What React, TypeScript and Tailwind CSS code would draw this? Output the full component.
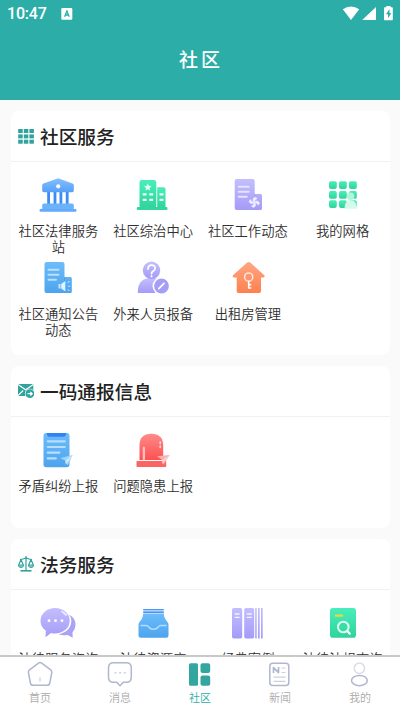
import type { ReactNode } from "react";

type Entry = { label: string; icon: ReactNode };

function Icon({ children }: { children: ReactNode }) {
  return (
    <svg viewBox="0 0 40 40" className="h-10 w-10 shrink-0" fill="none">
      {children}
    </svg>
  );
}

function Gradients() {
  return (
    <svg className="absolute h-0 w-0" aria-hidden="true">
      <defs>
        <linearGradient id="blue" x1="0" y1="0" x2="0" y2="1">
          <stop offset="0" stopColor="#84c1fc" />
          <stop offset="1" stopColor="#559ffa" />
        </linearGradient>
        <linearGradient id="sky" x1="0" y1="0" x2="0" y2="1">
          <stop offset="0" stopColor="#6dbcfa" />
          <stop offset="1" stopColor="#4da4ee" />
        </linearGradient>
        <linearGradient id="green" x1="0" y1="0" x2="0" y2="1">
          <stop offset="0" stopColor="#48eebb" />
          <stop offset="1" stopColor="#30d39a" />
        </linearGradient>
        <linearGradient id="violet" x1="0" y1="0" x2="0" y2="1">
          <stop offset="0" stopColor="#c3bffd" />
          <stop offset="1" stopColor="#a49bf8" />
        </linearGradient>
        <linearGradient id="orange" x1="0" y1="0" x2="0" y2="1">
          <stop offset="0" stopColor="#ffa683" />
          <stop offset="1" stopColor="#fd814f" />
        </linearGradient>
        <linearGradient id="red" x1="0" y1="0" x2="0" y2="1">
          <stop offset="0" stopColor="#ff8b8b" />
          <stop offset="1" stopColor="#fd5050" />
        </linearGradient>
      </defs>
    </svg>
  );
}

const courthouse = (
  <Icon>
    <path d="M9.2 16h2.8v13H9.2zM15.6 16h2.8v13h-2.8zM21.5 16h2.8v13h-2.8zM27.8 16h2.8v13h-2.8z" fill="#3a8cf8" />
    <path d="M20.2 3.3 34.6 8.6q1.2.5 1.2 1.6v5.3q0 1.7-1.6 1.7H5.8q-1.6 0-1.6-1.7v-5.3q0-1.1 1.2-1.6z" fill="url(#blue)" />
    <circle cx="20.2" cy="11.3" r="2.1" fill="#fff" />
    <path d="M6 28.5h28q1.8 0 1.8 1.8v3.9H4.2v-3.9q0-1.8 1.8-1.8z" fill="#6ab3fb" />
    <rect x="1.5" y="34" width="37" height="2.8" rx="1.2" fill="#62abfa" />
  </Icon>
);

const office = (
  <Icon>
    <rect x="6.5" y="5" width="16.8" height="28.5" rx="2.4" fill="url(#green)" />
    <path d="M24.2 12.3h6.3q2 0 2 2v19h-8.3z" fill="url(#green)" />
    <rect x="3.8" y="32" width="30.7" height="3" rx="1" fill="#35d5a0" />
    <path d="m14.8 8.2 1.1 2.5 2.7.3-2 1.9.6 2.7-2.4-1.4-2.4 1.4.6-2.7-2-1.9 2.7-.3z" fill="#dbfff2" />
    <path d="M9.7 18.2h3.8v2.3H9.7zM16.3 18.2h3.8v2.3h-3.8zM9.7 23.8h3.8v2.3H9.7zM16.3 23.8h3.8v2.3h-3.8zM26.5 18.2h4v2.3h-4zM26.5 23.8h4v2.3h-4z" fill="#eefff9" />
  </Icon>
);

const workNews = (
  <Icon>
    <path d="M8.7 4h16q2 0 2 2v13h5.8q1.5 0 1.5 1.5v13q0 1.5-1.5 1.5H8.7q-2 0-2-2V6q0-2 2-2z" fill="url(#violet)" />
    <path d="M26.7 19v16" stroke="#9d94f3" strokeWidth=".6" />
    <path d="M10.7 11.7h10M10.7 16.7h10M10.7 21.8h8" stroke="#e6e3ff" strokeWidth="2" strokeLinecap="round" />
    <path d="M26.3 27.3q-3-3 .6-5.3l2.3 1.4q-2.4.8-2.9 3.9q3-3 5.3.6l-1.4 2.3q-.8-2.4-3.9-2.9q3 3-.6 5.3l-2.3-1.4q2.4-.8 2.9-3.9q-3 3-5.3-.6l1.4-2.3q.8 2.4 3.9 2.9z" fill="#f1efff" stroke="#f1efff" strokeWidth=".5" />
  </Icon>
);

const myGrid = (
  <Icon>
    {[6.3, 16.1, 25.3].map((y) =>
      [6, 16, 26].map((x) => (
        <rect key={`${x}-${y}`} x={x} y={y} width="7.8" height="7.6" rx="1.8" fill="url(#green)" />
      ))
    )}
    <circle cx="27.6" cy="21.3" r="3.8" fill="#aef5da" />
    <path d="M21.5 33.7q0-8.3 6.2-8.5 6.2.2 6.2 8.5z" fill="#d2fbed" />
  </Icon>
);

const notice = (
  <Icon>
    <path d="M8.5 4h16q2 0 2 2v13h5.8q1.5 0 1.5 1.5v13q0 1.5-1.5 1.5H8.5q-2 0-2-2V6q0-2 2-2z" fill="url(#sky)" />
    <path d="M26.5 19v16" stroke="#4497e8" strokeWidth=".6" />
    <path d="M10.5 11.7h10M10.5 16.7h10M10.5 21.8h7.5" stroke="#b9e0ff" strokeWidth="2" strokeLinecap="round" />
    <path d="M20.5 26h2v4.5h-2z" fill="#c8e7ff" />
    <path d="m23.2 26 4.1-3v10.5l-4.1-3z" fill="#e4f4ff" />
    <path d="m29.5 24.7 2-1.3M29.8 28.2h2.4M29.5 31.6l2 1.3" stroke="#b9e0ff" strokeWidth="1.1" />
  </Icon>
);

const visitor = (
  <Icon>
    <path d="M4.8 35q-.2-8.7 4.2-12.3 3.2-2.6 9.5-2.6 8 0 10.5 3V35z" fill="url(#violet)" />
    <circle cx="18.5" cy="12.3" r="8.7" fill="url(#violet)" />
    <path d="M15 11q0-3.8 3.6-3.8 3.5 0 3.5 3.1 0 1.8-2 3-1.6.9-1.6 2.4" stroke="#fff" strokeWidth="1.7" strokeLinecap="round" />
    <circle cx="18.5" cy="18.3" r="1.1" fill="#fff" />
    <circle cx="28.5" cy="28" r="9" fill="#fff" />
    <circle cx="28.5" cy="28" r="7.4" fill="#a69ef6" />
    <path d="m25.8 30.7 5.2-5.3" stroke="#fff" strokeWidth="1.7" strokeLinecap="round" />
  </Icon>
);

const rental = (
  <Icon>
    <path d="M19.1 4.6q1.6-1.3 3.2 0L36 17.1q1.6 2-.5 2.3H33v13.8q0 1.8-1.8 1.8H10.5q-1.8 0-1.8-1.8V19.4H6q-2.3-.3-.7-2.3z" fill="url(#orange)" />
    <circle cx="20.7" cy="19" r="4.1" stroke="#ffe4d8" strokeWidth="1.5" />
    <path d="M20.7 23v7.8M20.7 26.8h2.6M20.7 30h2.6" stroke="#fff" strokeWidth="1.6" />
  </Icon>
);

const dispute = (
  <Icon>
    <rect x="5.5" y="3" width="26" height="34.3" rx="2.8" fill="url(#sky)" />
    <path d="M8.8 3h19.4q-.2 3.8-2.5 3.8H11.3Q9 6.8 8.8 3z" fill="#3183f2" />
    <path d="M9.8 11.3h17M9.8 17h17M9.8 22.7h11.5M9.8 28.4h8" stroke="#b7ddff" strokeWidth="2.2" strokeLinecap="round" />
    <path d="m22.3 28 12.4-3-5 10.5-2.3-4.7z" fill="#9bd3ff" />
    <path d="m34.7 25-7.3 5.8.3 4z" fill="#d3edff" />
  </Icon>
);

const hazard = (
  <Icon>
    <path d="M6.5 30V15.5q0-11.8 11.8-11.8t11.9 11.8V30z" fill="url(#red)" />
    <rect x="3.5" y="31" width="29.7" height="6.1" rx=".8" fill="#fc6464" />
    <path d="M10.9 18v11" stroke="#ffc1c1" strokeWidth="2.3" strokeLinecap="round" />
    <path d="M27.2 12v1.7M27.2 16v1.5" stroke="#ffd6d6" strokeWidth="1.6" strokeLinecap="round" />
    <path d="m24 26.2 12.6-1.2-6 9.8-1.5-4.8z" fill="#ffaeae" />
    <path d="m36.6 25-7.5 5 .3 4z" fill="#ffd5d5" />
  </Icon>
);

const consult = (
  <Icon>
    <path d="M31 11.5q6.5 3.5 6.5 10.3 0 4.4-3 7.5l.2 5.4-5-2.7q-4.7 1-9.2-.8Q33.5 28.5 33.3 17q-.2-3-2.3-5.5z" fill="#aaa3f5" />
    <path d="M17 5q6.2 0 10.5 3.7t4.2 9q0 5.400-4.300 9T17 30.400q-2.200 0-4-.5l-5.500 4.300.3-6.600Q2.500 24 2.500 17.700q0-5.300 4.300-9T17 5z" fill="url(#violet)" />
    <circle cx="11" cy="17.7" r="1.4" fill="#fff" />
    <circle cx="17.5" cy="17.7" r="1.4" fill="#fff" />
    <circle cx="24" cy="17.7" r="1.4" fill="#fff" />
    <path d="m24 8.3 4.2 3.7" stroke="#eceaff" strokeWidth="1.7" strokeLinecap="round" />
  </Icon>
);

const library = (
  <Icon>
    <path d="M10.2 6h20.6v1.5H10.2z" fill="#4b9cf4" />
    <path d="M10.2 8.4h20.6v1.5H10.2z" fill="#3585f2" />
    <path d="M10.2 10.6h20.6q.2 5 3.7 8.4 1 1 1 2.7v10.5q0 2.5-2.5 2.5H8q-2.5 0-2.5-2.5V21.7Q5.5 20 6.5 19q3.5-3.4 3.7-8.4z" fill="url(#sky)" />
    <path d="M7.5 22.5H13q2 0 3 1.8 1.4 2 4.500 2t4.500-2q1-1.800 3-1.800h5.500" stroke="#b3dcff" strokeWidth="1.500" />
  </Icon>
);

const cases = (
  <Icon>
    <rect x="4" y="5" width="10.2" height="30.5" rx="1.8" fill="url(#violet)" />
    <rect x="16.2" y="5" width="10" height="30.5" rx="1.8" fill="url(#violet)" />
    <path d="M27.2 5h1.5v30.5h-1.5zM30 5h1.7v30.5H30zM33 5h1.7v30.5H33z" fill="url(#violet)" />
    <path d="M6.7 11h5M6.7 14.3h5M18.8 11h5M18.8 14.3h5" stroke="#f4f2ff" strokeWidth="1.3" />
  </Icon>
);

const statutes = (
  <Icon>
    <rect x="7" y="5" width="26" height="29.7" rx="2.8" fill="url(#green)" />
    <path d="M12.7 12.7h6.5" stroke="#e9d83f" strokeWidth="2.2" strokeLinecap="round" />
    <circle cx="20.3" cy="24" r="5.3" stroke="#dcfff3" strokeWidth="2" />
    <path d="m24.3 28 2.5 2.7" stroke="#fff" strokeWidth="2.2" strokeLinecap="round" />
  </Icon>
);

const gridMark = (
  <svg viewBox="0 0 16 16" className="h-4 w-4" fill="#2fa39c">
    {[1, 6.4, 11.7].map((y) =>
      [0.2, 5.8, 11.4].map((x) => <rect key={`${x}-${y}`} x={x} y={y} width="4.5" height="4" />)
    )}
  </svg>
);

const mailMark = (
  <svg viewBox="0 0 16 16" className="h-4 w-4" fill="none">
    <path d="M0 1h15.3v12H0z" fill="#2fa39c" />
    <path d="m0 1.5 7.6 5.3 7.7-5.3M0 12.500l5.200-5" stroke="#fff" strokeWidth="1.100" />
    <circle cx="11.9" cy="10.7" r="5" fill="#fff" />
    <circle cx="11.9" cy="10.7" r="4.4" fill="#2fa39c" />
    <path d="M9.5 10.7H14M12.3 8.9l1.9 1.8-1.9 1.8" stroke="#fff" strokeWidth="1.2" />
  </svg>
);

const scaleMark = (
  <svg viewBox="0 0 16 16" className="h-4 w-4" fill="none" stroke="#2fa39c" strokeWidth="1.2">
    <path d="M8 0v14M2 3.5Q5.5 3.2 8 1.7q2.5 1.5 6 1.8M3 3.500.8 9M3 3.500 5.300 9M13 3.500 10.700 9M13 3.500 15.300 9" />
    <path d="M.2 9h5.600Q5.500 11.600 3 11.600T.2 9zM10.200 9h5.600q-.3 2.600-2.800 2.600T10.200 9z" fill="#8acbc7" strokeWidth=".9" />
    <path d="M2.500 14.800h11" strokeWidth="1.600" />
  </svg>
);

const SERVICES: Entry[] = [
  { label: "社区法律服务站", icon: courthouse },
  { label: "社区综治中心", icon: office },
  { label: "社区工作动态", icon: workNews },
  { label: "我的网格", icon: myGrid },
  { label: "社区通知公告动态", icon: notice },
  { label: "外来人员报备", icon: visitor },
  { label: "出租房管理", icon: rental },
];

const REPORTS: Entry[] = [
  { label: "矛盾纠纷上报", icon: dispute },
  { label: "问题隐患上报", icon: hazard },
];

const LEGAL: Entry[] = [
  { label: "法律服务咨询", icon: consult },
  { label: "法律资源库", icon: library },
  { label: "经典案例", icon: cases },
  { label: "法律法规查询", icon: statutes },
];

function Section({ title, mark, items, className }: { title: string; mark: ReactNode; items: Entry[]; className: string }) {
  return (
    <section className={`flex shrink-0 flex-col rounded-lg bg-white ${className}`}>
      <h2 className="flex h-[51px] shrink-0 items-center gap-1.5 border-b border-[#f1f1f1] pl-[7px] text-[18.7px] font-medium leading-none text-[#222]">
        {mark}
        {title}
      </h2>
      <div className="grid grid-cols-4 gap-y-[3px] pt-[13px]">
        {items.map((item) => (
          <button key={item.label} type="button" className="flex h-20 flex-col items-center">
            {item.icon}
            <span className="mt-2 w-[82px] text-center text-[13.3px] font-[350] leading-4 text-[#303030]">{item.label}</span>
          </button>
        ))}
      </div>
    </section>
  );
}

const TABS = [
  {
    label: "首页",
    icon: (
      <>
        <path d="M12.5 3.1q1.6-1.3 3.2 0l9 6.7q1.4 1 1.1 2.7l-2 10.5q-.4 2.3-2.8 2.3H7.2q-2.4 0-2.8-2.3l-2-10.5q-.3-1.7 1.1-2.7z" />
        <path d="M14 17.5v4" stroke="#d5d8e5" />
      </>
    ),
  },
  {
    label: "消息",
    icon: (
      <>
        <path d="M7.5 2.8h12.8q5 0 5 5v9.5q0 5-5 5h-3L14 25.7l-3.3-3.4H7.5q-5 0-5-5V7.8q0-5 5-5z" />
        <path d="M8.5 12.7h1.8M13.2 12.7H15M17.9 12.7h1.8" stroke="#c9cddd" />
      </>
    ),
  },
  {
    label: "社区",
    active: true,
    icon: (
      <g fill="#34a6a0" stroke="none">
        <rect x="3" y="3.3" width="9" height="22.5" rx="1.5" />
        <rect x="14.5" y="3.3" width="9.7" height="9.6" rx="2" />
        <rect x="14.5" y="15.5" width="9.7" height="10.3" rx="2" />
      </g>
    ),
  },
  {
    label: "新闻",
    icon: (
      <>
        <rect x="3.8" y="3.2" width="19" height="22.3" rx="3" />
        <path d="M7.5 13V7.6l5 5V7" strokeWidth="1.7" />
        <path d="M15.5 8h4M15.5 12.5h4M7.5 17.2h12M7.5 21.3h12" stroke="#cbd0df" strokeWidth="1.2" />
      </>
    ),
  },
  {
    label: "我的",
    icon: (
      <>
        <circle cx="13.4" cy="8.3" r="5.2" stroke="#dcdde4" />
        <ellipse cx="13.4" cy="20.6" rx="7.9" ry="5.1" />
      </>
    ),
  },
];

function StatusBar() {
  return (
    <div className="flex h-7 items-center px-[7px] font-[Roboto,sans-serif] text-base font-medium text-white">
      <span className="w-10 tracking-[-0.2px]">10:47</span>
      <svg viewBox="0 0 12 12" className="ml-3.5 h-3 w-3">
        <rect x=".3" y="0" width="11" height="11.7" rx="1.3" fill="#fff" />
        <path d="M3.6 8.8 5.9 3l2.3 5.8M4.5 7h2.8" fill="none" stroke="#2dada8" strokeWidth="1.3" />
      </svg>
      <svg viewBox="0 0 52 16" className="ml-auto h-4 w-[52px]" fill="#fff">
        <path d="M1.8 3.3Q10-2.5 18.2 3.3L10 14z" />
        <path d="M35 1v13H21.2z" />
        <path d="M45.3-.2h4.2v1.5H51q.8 0 .8.8v11.300q0 .9-.9.900h-7q-.9 0-.9-.9V2.100q0-.8.800-.8h1.500z" />
        <path d="M48.500 2.900 45 8.200h2v4.100l3.300-5.300h-1.800z" fill="#2dada8" />
      </svg>
    </div>
  );
}

export default function App() {
  return (
    <div className="flex h-[711px] w-[400px] flex-col overflow-hidden bg-[#fafafa] font-['Noto_Sans_CJK_SC',sans-serif]">
      <Gradients />
      <header className="h-[100px] shrink-0 bg-[#2dada8]">
        <StatusBar />
        <h1 className="pl-[2px] pt-[17px] text-center text-[19px] font-medium leading-7 tracking-[3px] text-white">社区</h1>
      </header>
      <main className="flex min-h-0 flex-1 flex-col overflow-hidden pl-[11px] pr-2.5 pt-[11px]">
        <Section title="社区服务" mark={gridMark} items={SERVICES} className="h-[244px]" />
        <Section title="一码通报信息" mark={mailMark} items={REPORTS} className="mt-[11px] h-[162px]" />
        <Section title="法务服务" mark={scaleMark} items={LEGAL} className="mt-[11px] h-[161px]" />
      </main>
      <nav className="flex h-14 shrink-0 border-t-2 border-[#c9c9c9] bg-white">
        {TABS.map((tab) => (
          <button key={tab.label} type="button" className="flex flex-1 flex-col items-center pt-[3px]">
            <svg viewBox="0 0 28 28" className="h-7 w-7" fill="none" stroke="#b0b7cf" strokeWidth="1.5" strokeLinejoin="round">
              {tab.icon}
            </svg>
            <span className={`mt-px text-[11px] font-[350] leading-4 ${tab.active ? "text-[#2dada8]" : "text-[#aaa]"}`}>{tab.label}</span>
          </button>
        ))}
      </nav>
    </div>
  );
}
